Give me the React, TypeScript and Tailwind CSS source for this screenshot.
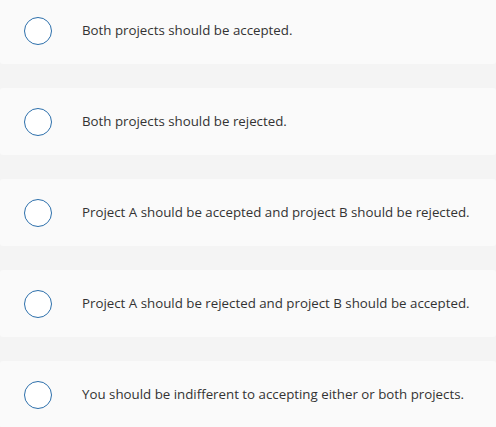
const options = [
  'Both projects should be accepted.',
  'Both projects should be rejected.',
  'Project A should be accepted and project B should be rejected.',
  'Project A should be rejected and project B should be accepted.',
  'You should be indifferent to accepting either or both projects.',
]

export default function App() {
  return (
    <div className="w-[496px] h-[427px] overflow-hidden bg-[#f4f4f4]">
      <div className="-mt-[3px] flex flex-col gap-[24px]">
        {options.map((text) => (
          <label
            key={text}
            className="flex items-center h-[67px] bg-[#fafafa] rounded-[3px] pl-[24px] font-['Open_Sans',sans-serif] text-[13.3px] text-[#333]"
          >
            <span className="w-[28px] h-[28px] rounded-full border-[1.5px] border-[#2c6fab] bg-white shrink-0" />
            <span className="ml-[30px]">{text}</span>
          </label>
        ))}
      </div>
    </div>
  )
}
